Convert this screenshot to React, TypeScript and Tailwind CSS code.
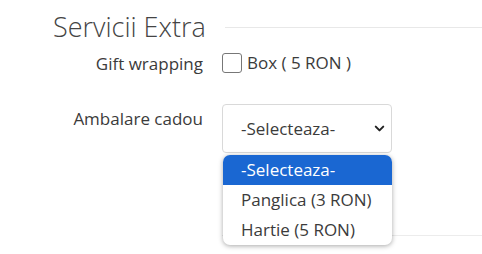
import { ChevronDown } from "lucide-react";

const options = ["-Selecteaza-", "Panglica (3 RON)", "Hartie (5 RON)"];

export default function App() {
  return (
    <div className="relative h-[254px] w-[482px] overflow-hidden bg-white text-[#3b3b3b] [font-family:'Open_Sans',sans-serif]">
      <div className="flex items-center pt-[12px]">
        <h2 className="ml-[53px] text-[27px] font-light leading-[30px] text-[#444]">
          Servicii Extra
        </h2>
        <div className="ml-[19px] h-px flex-1 bg-[#e8e8e8]" />
      </div>

      <div className="mt-[9px] flex items-start">
        <div className="w-[203px] pt-[1px] text-right text-[17px] leading-[24px]">
          Gift wrapping
        </div>
        <label className="ml-[19px] flex items-center gap-[5px] text-[17px] leading-[24px]">
          <span className="h-[20px] w-[20px] rounded-[3px] border border-[#777] bg-white" />
          Box ( 5 RON )
        </label>
      </div>

      <div className="mt-[28px] flex items-start">
        <div className="w-[203px] pt-[3px] text-right text-[17px] leading-[24px]">
          Ambalare cadou
        </div>
        <div className="relative ml-[19px] w-[170px]">
          <div className="flex h-[49px] items-center justify-between rounded-[4px] border border-[#d9d9d9] pl-[18px] pr-[4px] text-[17px]">
            <span>-Selecteaza-</span>
            <ChevronDown className="h-[15px] w-[15px] text-[#222]" strokeWidth={3.2} />
          </div>
          <div className="absolute left-[1px] top-[51px] z-10 w-[169px] overflow-hidden rounded-[7px] bg-white shadow-[0_1px_5px_rgba(0,0,0,0.35)]">
            {options.map((o, i) => (
              <div
                key={o}
                className={
                  i === 0
                    ? "h-[30px] bg-[#1a67d2] pl-[18px] text-[17px] leading-[30px] text-white"
                    : "h-[30px] pl-[18px] text-[17px] leading-[30px]"
                }
              >
                {o}
              </div>
            ))}
          </div>
        </div>
      </div>

      <div className="ml-[222px] mt-[82px] h-px bg-[#ececec]" />
    </div>
  );
}
